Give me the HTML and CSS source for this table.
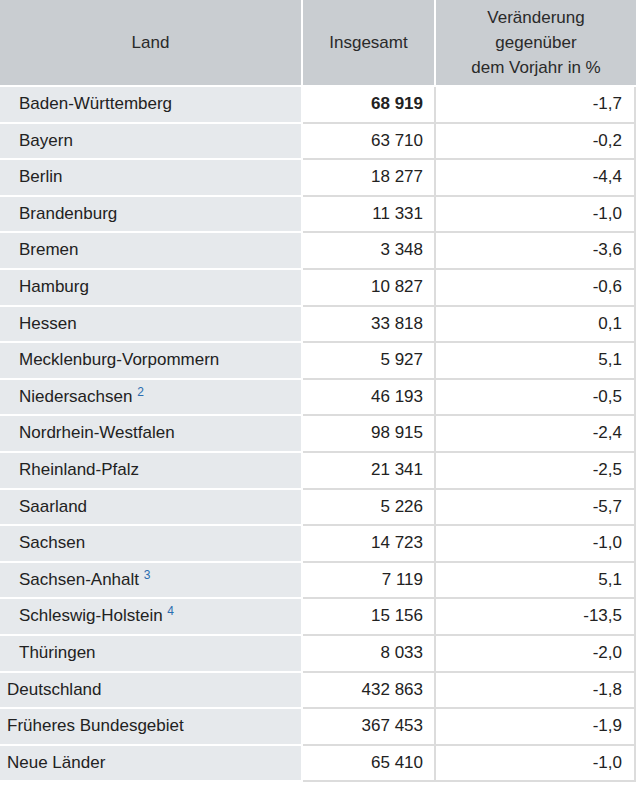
FILE: index.html
```html
<!DOCTYPE html>
<html lang="de">
<head>
<meta charset="utf-8">
<title>Länder</title>
<link rel="stylesheet" href="styles.css">
</head>
<body>
<table class="data">
  <colgroup>
    <col class="c1">
    <col class="c2">
    <col class="c3">
  </colgroup>
  <thead>
    <tr>
      <th>Land</th>
      <th>Insgesamt</th>
      <th>Veränderung<br>gegenüber<br>dem Vorjahr in %</th>
    </tr>
  </thead>
  <tbody>
    <tr><th class="sub">Baden-Württemberg</th><td class="bold">68 919</td><td>-1,7</td></tr>
    <tr><th class="sub">Bayern</th><td>63 710</td><td>-0,2</td></tr>
    <tr><th class="sub">Berlin</th><td>18 277</td><td>-4,4</td></tr>
    <tr><th class="sub">Brandenburg</th><td>11 331</td><td>-1,0</td></tr>
    <tr><th class="sub">Bremen</th><td>3 348</td><td>-3,6</td></tr>
    <tr><th class="sub">Hamburg</th><td>10 827</td><td>-0,6</td></tr>
    <tr><th class="sub">Hessen</th><td>33 818</td><td>0,1</td></tr>
    <tr><th class="sub">Mecklenburg-Vorpommern</th><td>5 927</td><td>5,1</td></tr>
    <tr><th class="sub">Niedersachsen <sup class="fn">2</sup></th><td>46 193</td><td>-0,5</td></tr>
    <tr><th class="sub">Nordrhein-Westfalen</th><td>98 915</td><td>-2,4</td></tr>
    <tr><th class="sub">Rheinland-Pfalz</th><td>21 341</td><td>-2,5</td></tr>
    <tr><th class="sub">Saarland</th><td>5 226</td><td>-5,7</td></tr>
    <tr><th class="sub">Sachsen</th><td>14 723</td><td>-1,0</td></tr>
    <tr><th class="sub">Sachsen-Anhalt <sup class="fn">3</sup></th><td>7 119</td><td>5,1</td></tr>
    <tr><th class="sub">Schleswig-Holstein <sup class="fn">4</sup></th><td>15 156</td><td>-13,5</td></tr>
    <tr><th class="sub">Thüringen</th><td>8 033</td><td>-2,0</td></tr>
    <tr><th>Deutschland</th><td>432 863</td><td>-1,8</td></tr>
    <tr><th>Früheres Bundesgebiet</th><td>367 453</td><td>-1,9</td></tr>
    <tr><th>Neue Länder</th><td>65 410</td><td>-1,0</td></tr>
  </tbody>
</table>
</body>
</html>
```

FILE: styles.css
```css
html, body {
  margin: 0;
  padding: 0;
  background: #ffffff;
}

body {
  font-family: "Liberation Sans", Arial, sans-serif;
  font-size: 17px;
  color: #222222;
}

.data {
  width: 636px;
  table-layout: fixed;
  border-collapse: separate;
  border-spacing: 0;
}

.c1 { width: 303px; }
.c2 { width: 133px; }
.c3 { width: 200px; }

.data thead th {
  background: #c9cdd1;
  font-weight: normal;
  text-align: center;
  vertical-align: middle;
  line-height: 25px;
  padding: 5px 8px 5px;
  color: #2a2a2a;
  border-right: 2px solid #ffffff;
  border-bottom: 2px solid #ffffff;
}

.data thead th:last-child {
  border-right: 0;
}

.data tbody th,
.data tbody td {
  line-height: 20.6px;
  padding: 7px 0;
  vertical-align: middle;
}

.data tbody th {
  background: #e6e9ec;
  font-weight: normal;
  text-align: left;
  padding-left: 7px;
  border-right: 2px solid #ffffff;
  border-bottom: 2px solid #ffffff;
  white-space: nowrap;
}

.data tbody th.sub {
  padding-left: 19px;
}

.data tbody td {
  background: #ffffff;
  text-align: right;
  padding-right: 11px;
  border-right: 2px solid #dcdcdc;
  border-bottom: 2px solid #dcdcdc;
}

.data tbody td:last-child {
  padding-right: 12px;
}

.bold {
  font-weight: bold;
}

.fn {
  color: #2a6db0;
  font-size: 12px;
  line-height: 0;
  vertical-align: 6px;
}
```
